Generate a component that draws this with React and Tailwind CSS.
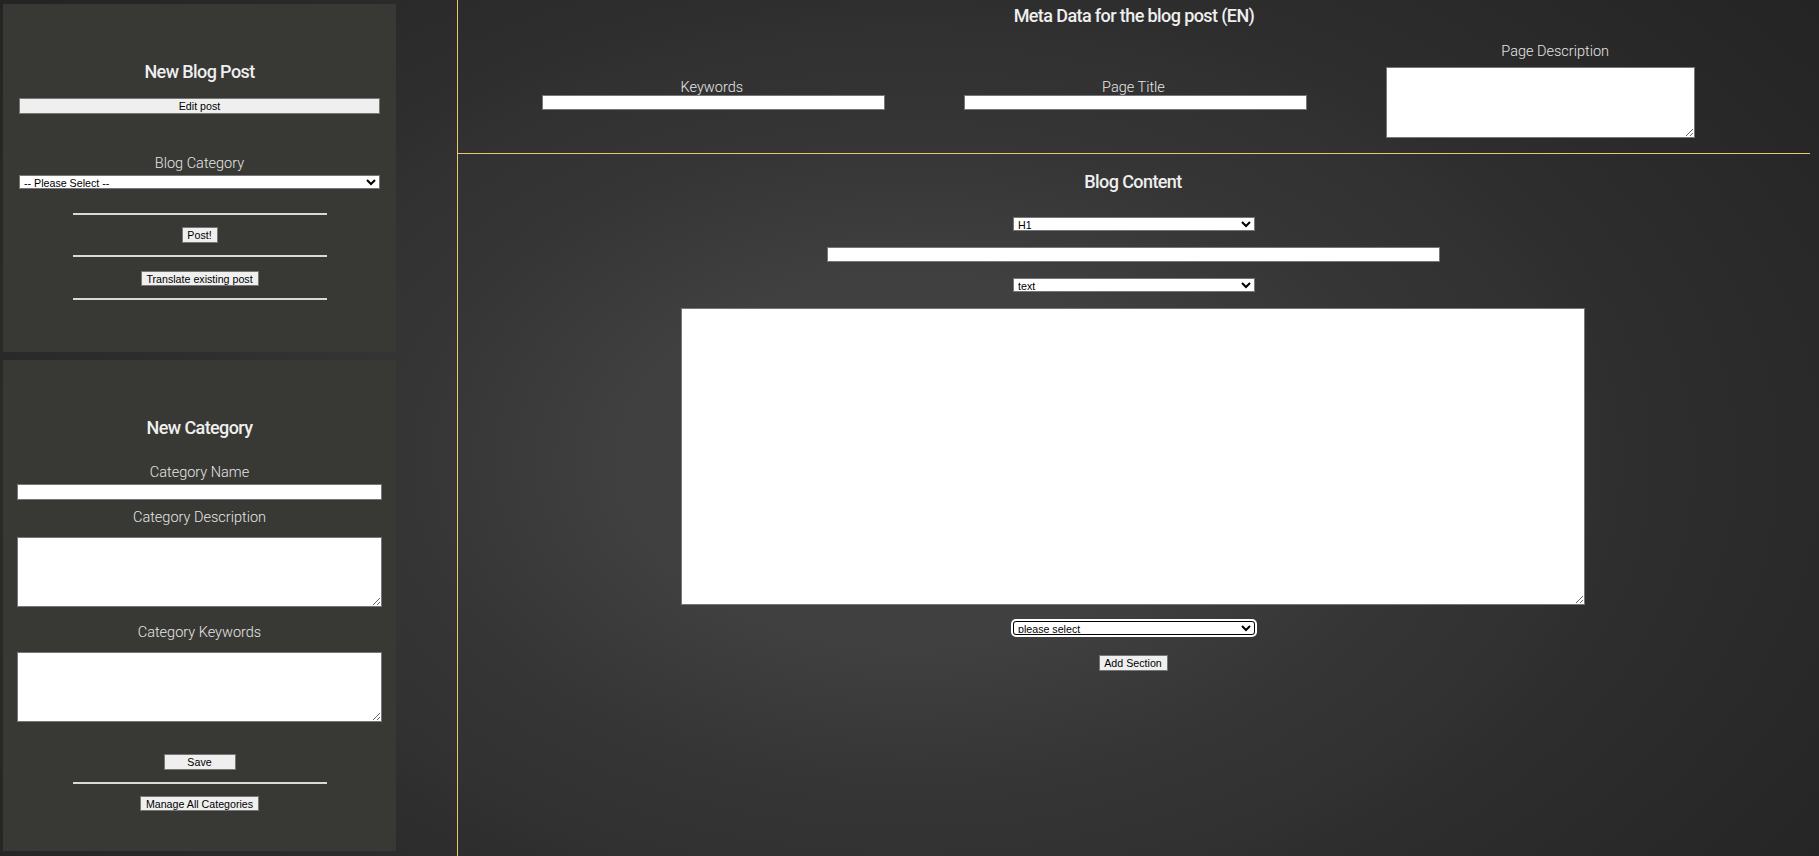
const font = "font-['Roboto',sans-serif]";
const arial = "font-['Liberation_Sans',Arial,sans-serif]";
const heading = `${font} text-[18px] leading-[24px] font-medium tracking-[-0.6px] text-[#efefef] text-center`;
const label = `${font} text-[14.5px] leading-[20px] font-light text-[#e6e6e6] text-center`;
const btn = `${arial} block text-[10.67px] leading-none text-black bg-[#efefef] border border-[#767676] p-0`;
const field = "block bg-white border border-[#767676] p-0";
const sel = `${arial} block text-[10.67px] leading-none text-black bg-white border border-[#767676] pb-[1px]`;
const rule = "w-[254px] h-[2px] border-0 bg-[#d9d9d9]";

export default function App() {
  return (
    <div className="w-full h-[856px] overflow-hidden flex bg-[radial-gradient(1300px_840px_at_50%_54%,#414141_0%,#404040_22%,#3c3c3c_28%,#353535_39%,#313131_51%,#2e2e2e_55.5%,#2a2a2a_68.5%,#252525_85%,#222222_100%)]">
      <aside className="w-[399px] pl-[3px] pt-[4px] shrink-0">
        <section className="w-[393px] h-[348px] bg-[#383834] flex flex-col items-center pt-[56px]">
          <h2 className={heading}>New Blog Post</h2>
          <button className={`${btn} w-[361px] h-[16px] mt-[14px]`}>Edit post</button>
          <div className={`${label} mt-[40px]`}>Blog Category</div>
          <select className={`${sel} w-[361px] h-[14px] mt-[1px]`}><option>-- Please Select --</option></select>
          <hr className={`${rule} mt-[24px]`} />
          <button className={`${btn} w-[36px] h-[16px] mt-[12px]`}>Post!</button>
          <hr className={`${rule} mt-[12px]`} />
          <button className={`${btn} w-[118px] h-[15px] mt-[14px] pt-[1px]`}>Translate existing post</button>
          <hr className={`${rule} mt-[12px]`} />
        </section>
        <section className="w-[393px] h-[491px] mt-[8px] bg-[#383834] flex flex-col items-center pt-[56px]">
          <h2 className={heading}>New Category</h2>
          <div className={`${label} mt-[23px]`}>Category Name</div>
          <input className={`${field} w-[365px] h-[16px] mt-[1px]`} />
          <div className={`${label} mt-[8px]`}>Category Description</div>
          <textarea className={`${field} w-[365px] h-[70px] mt-[9px]`} />
          <div className={`${label} mt-[16px]`}>Category Keywords</div>
          <textarea className={`${field} w-[365px] h-[70px] mt-[9px]`} />
          <button className={`${btn} w-[72px] h-[16px] mt-[32px]`}>Save</button>
          <hr className={`${rule} mt-[12px]`} />
          <button className={`${btn} w-[119px] h-[15px] mt-[12px] pt-[1px]`}>Manage All Categories</button>
        </section>
      </aside>
      <main className="ml-[58px] w-[1353px] h-full border-l border-[#ecc76e] shrink-0">
        <div className="h-[154px] border-b border-[#ecc76e]">
          <h2 className={`${heading} h-[32px] leading-[32px]`}>Meta Data for the blog post (EN)</h2>
          <div className="w-[1265px] ml-[43px] grid grid-cols-3">
            <div className="pt-[46px]">
              <div className={`${label} h-[17px] leading-[16px]`}>Keywords</div>
              <input className={`${field} w-[343px] h-[15px] ml-[41px]`} />
            </div>
            <div className="pt-[46px]">
              <div className={`${label} h-[17px] leading-[16px]`}>Page Title</div>
              <input className={`${field} w-[343px] h-[15px] ml-[41px]`} />
            </div>
            <div className="pt-[10px]">
              <div className={`${label} h-[16px] leading-[16px]`}>Page Description</div>
              <textarea className={`${field} w-[309px] h-[71px] ml-[42px] mt-[9px]`} />
            </div>
          </div>
        </div>
        <div className="flex flex-col items-center pt-[16px] pr-[2px]">
          <h2 className={heading}>Blog Content</h2>
          <select className={`${sel} w-[242px] h-[14px] mt-[23px] ml-[2px]`}><option>H1</option></select>
          <input className={`${field} w-[613px] h-[15px] mt-[16px]`} />
          <select className={`${sel} w-[242px] h-[14px] mt-[16px] ml-[2px]`}><option>text</option></select>
          <textarea className={`${field} w-[904px] h-[297px] mt-[16px]`} />
          <select className={`${sel} w-[242px] h-[14px] mt-[16px] ml-[2px] rounded-[3px] border-black outline-2 outline-white`}><option>please select</option></select>
          <button className={`${btn} w-[69px] h-[16px] mt-[20px]`}>Add Section</button>
        </div>
      </main>
    </div>
  );
}
